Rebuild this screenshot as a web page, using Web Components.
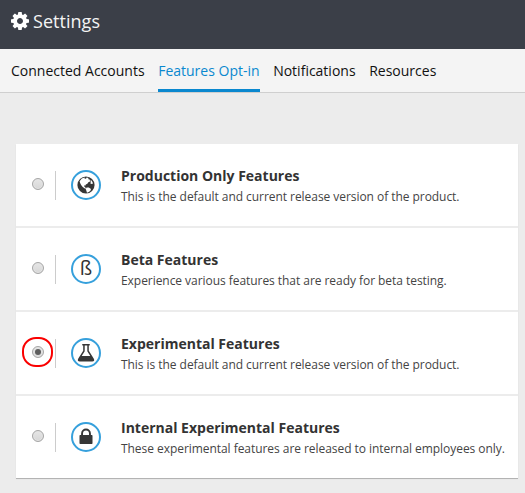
<!DOCTYPE html>
<html lang="en">
<head>
<meta charset="utf-8">
<title>Settings</title>
<style>
html,body{margin:0;height:100%;background:#ececec;overflow:hidden;font-family:"Open Sans","Noto Sans",sans-serif}
</style>
</head>
<body>
<settings-page></settings-page>
<script>
const icons = {
  globe: `<svg viewBox="0 0 32 32"><circle cx="16" cy="16" r="8.6" fill="#363636"/><path fill="#fff" d="M9.6 12.2l2.2-2.7 2.9-1-.2 1.1 1.5.1.6-1.2 2 .5-.5 1 1.9.8-.2 1.9-1.5.5-.9 1.6-1.6.7-.3 1.1-1.5-.2.3 1.2 1.8 1.7-.9.5-2.5-1.9-1.6-1.9-1-1.9zM21 11l1.3 1.7.7 1.8-1.4.6-1.4-.9.7-1.2-.6-.9zM16.6 18.6l2.2 0 2.2 1.3-.6 1.8-1.6 1.4-1.8.6-.8-2.5-.5-1.2z"/></svg>`,
  beta: `<span>ß</span>`,
  flask: `<svg viewBox="0 0 32 32"><path fill="#363636" fill-rule="evenodd" d="M12.7 7h6.6q.6 0 .6.7t-.6.7h-.5v5.4l4.9 7.6q1.5 3-1.5 3H9.8q-3 0-1.5-3l4.9-7.6V8.4h-.5q-.6 0-.6-.7t.6-.7zM14.7 8.4v5.8l-3 4.7h8.6l-3-4.7V8.4z"/></svg>`,
  lock: `<svg viewBox="0 0 32 32"><path fill="#363636" fill-rule="evenodd" d="M10.2 14h.9V12.4a4.9 4.9 0 0 1 9.8 0V14h.9q.7 0 .7.7v7.6q0 .7-.7.7H10.2q-.7 0-.7-.7v-7.6q0-.7.7-.7zM13 14h6V12.4a3 3 0 0 0-6 0z"/></svg>`
};
const define = (name, html) => customElements.define(name, class extends HTMLElement {
  constructor() {
    super();
    const root = this.attachShadow({ mode: "open" });
    root.innerHTML = typeof html === "function" ? html(this) : html;
  }
});

define("settings-header", `<style>
:host{display:flex;height:49px;box-sizing:border-box;padding:0 0 8px 11px;align-items:center;gap:4px;background:#3b3f48;color:#f4f4f4;font-size:18px;letter-spacing:.03px}
svg{width:18px;height:18px;display:block;margin-top:1px}
</style>
<svg viewBox="0 -128 1536 1536" fill="#fff"><path d="M1024 640q0-106-75-181t-181-75-181 75-75 181 75 181 181 75 181-75 75-181zm512-109v222q0 12-8 23t-20 13l-185 28q-19 54-39 91 35 50 107 138 10 12 10 25t-9 23q-27 37-99 108t-94 71q-12 0-26-9l-138-108q-44 23-91 38-16 136-29 186-7 28-36 28h-222q-14 0-24.5-8.5t-11.5-21.5l-28-184q-49-16-90-37l-141 107q-10 9-25 9-14 0-25-11-126-114-165-168-7-10-7-23 0-12 8-23 15-21 51-66.5t54-70.5q-27-50-41-99l-183-27q-13-2-21-12.5t-8-23.5v-222q0-12 8-23t19-13l186-28q14-46 39-92-40-57-107-138-10-12-10-24 0-10 9-23 26-36 98.5-107.5t94.5-71.5q13 0 26 10l138 107q44-23 91-38 16-136 29-186 7-28 36-28h222q14 0 24.5 8.5t11.5 21.5l28 184q49 16 90 37l142-107q9-9 24-9 13 0 25 10 129 119 165 170 7 8 7 22 0 12-8 23-15 21-51 66.5t-54 70.5q26 50 41 98l183 28q13 2 21 12.5t8 23.5z"/></svg>
<slot></slot>`);

define("settings-tab", `<style>
:host{display:block;box-sizing:border-box;height:43px;line-height:43px;font-size:14px;color:#111;white-space:nowrap}
:host([active]){color:#0a88cf;border-bottom:3px solid #0a88cf}
</style><slot></slot>`);

define("settings-tabs", `<style>
:host{display:flex;gap:13.6px;height:44px;box-sizing:border-box;padding-left:11px;background:#f4f4f4;border-bottom:1px solid #cfcfcf}
</style><slot></slot>`);

define("radio-dot", `<style>
:host{display:flex;align-items:center;justify-content:center;width:12px;height:12px;box-sizing:border-box;border:1px solid #a5a5a5;border-radius:50%;background:linear-gradient(#e6e6e6,#d7d7d7);box-shadow:inset 0 0 0 1px #e4e4e4}
:host([checked])::before{content:"";width:6px;height:6px;border-radius:50%;background:#5d5d5d}
</style>`);

define("feature-row", el => `<style>
:host{display:flex;align-items:center;height:84px;box-sizing:border-box;border-bottom:2px solid #ececec;background:#fff}
:host(:last-child){border-bottom:0;height:82px}
.pick{display:flex;align-items:center;justify-content:center;box-sizing:border-box;width:32px;height:30px;margin:-2px 1px 0 6px;border:2px solid transparent;border-radius:15px}
.pick.marked{width:31px;margin-right:2px;border-color:#fa0000;padding-left:1px;border-radius:14px}
.line{width:1px;height:29px;background:#ccc;margin-top:1px}
.icon{box-sizing:border-box;width:30px;height:30px;border:2px solid #36a0dc;border-radius:50%;margin:0 20px 0 15px;display:flex;align-items:center;justify-content:center;color:#333}
svg{width:32px;height:32px;flex:none}
.icon span{font-size:20px;line-height:20px;margin:-3px 0 0 0}
.title{font-size:14px;line-height:20px;font-weight:700;color:#333}
.desc{font-size:12px;line-height:20px;color:#444;margin-top:1px;letter-spacing:-.05px}
.text{white-space:nowrap;margin-top:2px}
</style>
<div class="pick${el.hasAttribute("checked") ? " marked" : ""}"><radio-dot${el.hasAttribute("checked") ? " checked" : ""}></radio-dot></div>
<div class="line"></div>
<div class="icon">${icons[el.getAttribute("icon")]}</div>
<div class="text"><div class="title"><slot name="title"></slot></div><div class="desc"><slot></slot></div></div>`);

define("feature-list", `<style>
:host{display:block;margin:51px 7px 0 16px;box-shadow:0 1px 1px rgba(0,0,0,.1),0 1px 0 #c8c8c8}
</style><slot></slot>`);

define("settings-page", `<style>:host{display:block}</style>
<settings-header>Settings</settings-header>
<settings-tabs><settings-tab>Connected Accounts</settings-tab><settings-tab active>Features Opt-in</settings-tab><settings-tab>Notifications</settings-tab><settings-tab>Resources</settings-tab></settings-tabs>
<feature-list>
<feature-row icon="globe"><span slot="title">Production Only Features</span>This is the default and current release version of the product.</feature-row>
<feature-row icon="beta"><span slot="title">Beta Features</span>Experience various features that are ready for beta testing.</feature-row>
<feature-row icon="flask" checked><span slot="title">Experimental Features</span>This is the default and current release version of the product.</feature-row>
<feature-row icon="lock"><span slot="title">Internal Experimental Features</span>These experimental features are released to internal employees only.</feature-row>
</feature-list>`);
</script>
</body>
</html>
